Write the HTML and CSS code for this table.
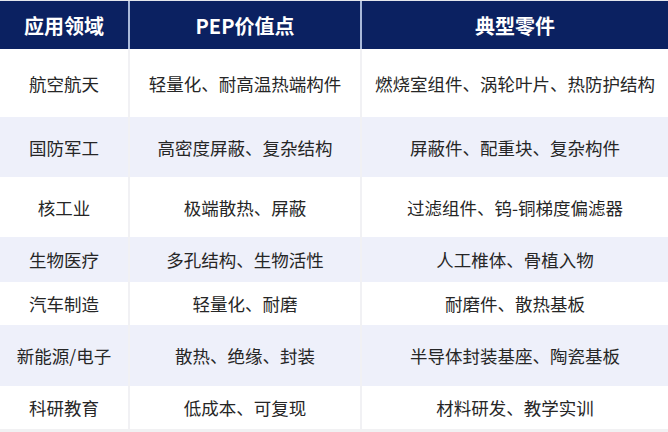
FILE: index.html
```html
<!DOCTYPE html>
<html lang="zh-CN">
<head>
<meta charset="utf-8">
<title>PEP 应用领域</title>
<link rel="stylesheet" href="styles.css">
</head>
<body>
<table class="pep-table">
  <colgroup>
    <col class="c1"><col class="c2"><col class="c3">
  </colgroup>
  <thead>
    <tr class="head">
      <th>应用领域</th>
      <th>PEP价值点</th>
      <th>典型零件</th>
    </tr>
  </thead>
  <tbody>
    <tr class="r1"><td>航空航天</td><td>轻量化、耐高温热端构件</td><td>燃烧室组件、涡轮叶片、热防护结构</td></tr>
    <tr class="r2 alt"><td>国防军工</td><td>高密度屏蔽、复杂结构</td><td>屏蔽件、配重块、复杂构件</td></tr>
    <tr class="r3"><td>核工业</td><td>极端散热、屏蔽</td><td>过滤组件、钨-铜梯度偏滤器</td></tr>
    <tr class="r4 alt"><td>生物医疗</td><td>多孔结构、生物活性</td><td>人工椎体、骨植入物</td></tr>
    <tr class="r5"><td>汽车制造</td><td>轻量化、耐磨</td><td>耐磨件、散热基板</td></tr>
    <tr class="r6 alt"><td>新能源/电子</td><td>散热、绝缘、封装</td><td>半导体封装基座、陶瓷基板</td></tr>
    <tr class="r7"><td>科研教育</td><td>低成本、可复现</td><td>材料研发、教学实训</td></tr>
  </tbody>
</table>
</body>
</html>
```
FILE: styles.css
```css
html, body {
  margin: 0;
  padding: 0;
  background: #ffffff;
}
body {
  width: 668px;
  height: 432px;
  overflow: hidden;
  font-family: "Noto Sans CJK SC", "Noto Sans", "Liberation Sans", sans-serif;
}
.pep-table {
  width: 668px;
  border-collapse: separate;
  border-spacing: 0;
  table-layout: fixed;
  border-top: 1px solid #e4e6ec;
  border-bottom: 3px solid #f1f1f3;
}
.c1 { width: 130px; }
.c2 { width: 232px; }
.c3 { width: 306px; }
th, td {
  padding: 0;
  text-align: center;
  vertical-align: middle;
  white-space: nowrap;
}
th {
  background: #0b2161;
  color: #ffffff;
  font-size: 20px;
  font-weight: 700;
  height: 48px;
  border-right: 2px solid #a9b9da;
}
td {
  color: #262626;
  font-size: 17.5px;
  font-weight: 400;
  border-right: 2px solid #f1f1f4;
}
th:last-child, td:last-child {
  border-right: none;
}
.alt td {
  background: #eef0fa;
}
.r1 td { height: 68px; }
.r2 td { height: 60px; }
.r3 td { height: 60px; }
.r4 td { height: 45px; }
.r5 td { height: 43px; }
.r6 td { height: 61px; }
.r7 td { height: 43px; }
```
